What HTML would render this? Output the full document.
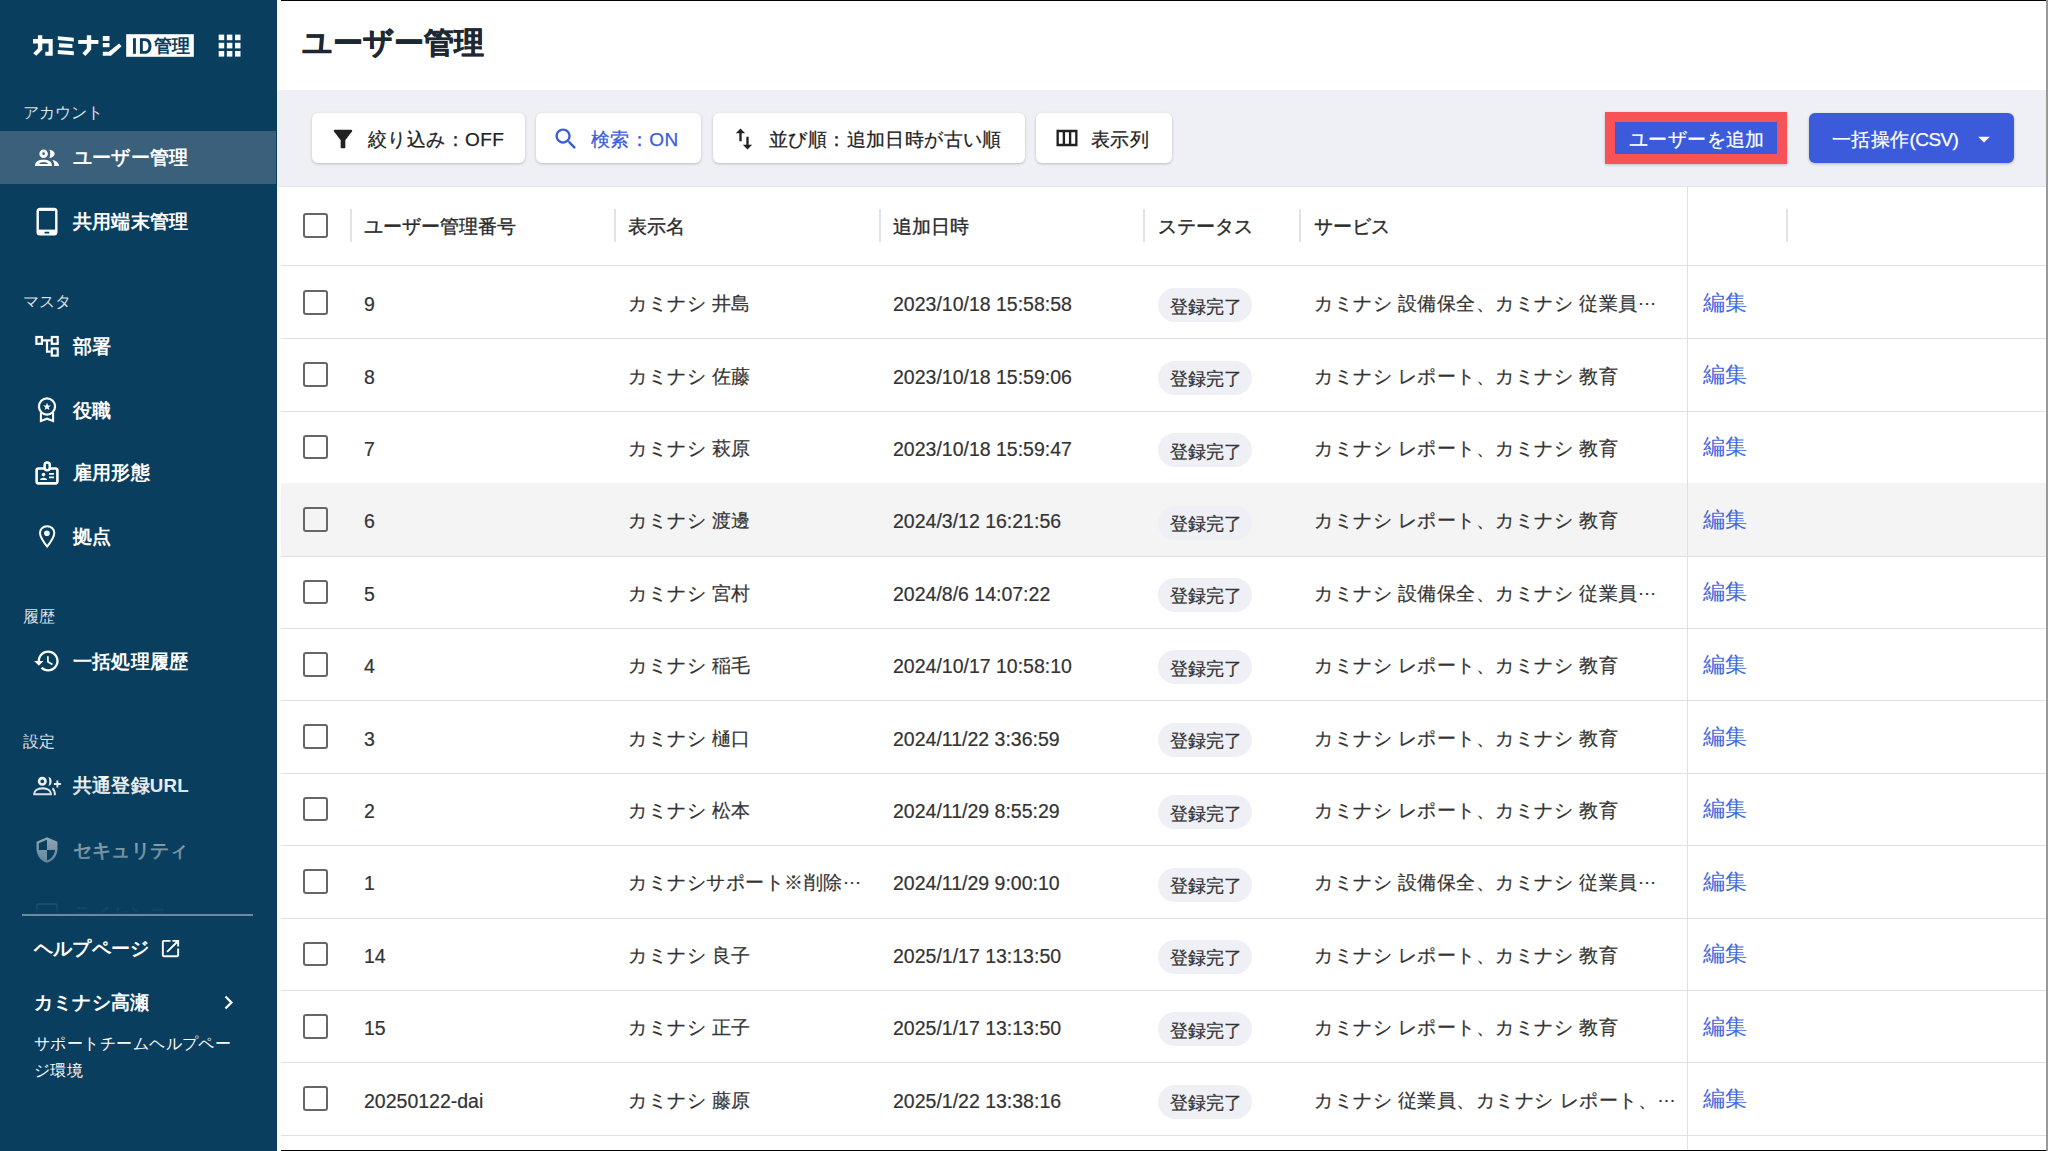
<!DOCTYPE html><html lang="ja"><head><meta charset="utf-8"><style>
*{box-sizing:border-box;margin:0;padding:0}
html,body{width:2048px;height:1151px;overflow:hidden;background:#fff}
body{position:relative;font-family:"Liberation Sans",sans-serif;color:#333}
.a{position:absolute;white-space:nowrap}
svg{position:absolute;display:block}
#side{position:absolute;left:0;top:0;width:277px;height:1151px;background:#0a3e5e;overflow:hidden}
.lbl{position:absolute;left:23px;font-size:16px;line-height:20px;color:rgba(255,255,255,0.88)}
.nav{position:absolute;left:73px;font-size:18.7px;letter-spacing:0.2px;line-height:24px;font-weight:bold;color:#fff}
.btn{position:absolute;top:113px;height:50px;background:#fff;border-radius:6px;box-shadow:0 1px 3px rgba(0,0,0,0.22)}
.bt{position:absolute;font-size:19px;letter-spacing:0.4px;line-height:24px;top:127.5px;color:#222;-webkit-text-stroke:0.25px currentColor}
.hd{position:absolute;top:215px;font-size:19px;line-height:24px;color:#2a2a2a;-webkit-text-stroke:0.35px #2a2a2a}
.sep{position:absolute;top:209px;width:2px;height:33px;background:#e3e3e3}
.cb{position:absolute;left:303px;width:25px;height:24.5px;border:2.6px solid #666;border-radius:3px}
.rl{position:absolute;left:281px;width:1765px;height:1px;background:#e0e0e0}
.tx{position:absolute;font-size:19.5px;line-height:24px;color:#333;-webkit-text-stroke:0.2px #333}
.badge{position:absolute;left:1158px;width:94px;height:34px;border-radius:17px;background:#eff0f5}
.bdt{position:absolute;left:1169.5px;font-size:17.8px;line-height:22px;color:#333;-webkit-text-stroke:0.25px #333}
.ed{position:absolute;left:1703px;font-size:21.5px;line-height:26px;color:#4568dd}
</style></head><body>
<div id="side">
<svg style="left:0;top:0" width="200" height="70" viewBox="0 0 200 70"><g fill="#fff">
<path d="M33 39 H52.7 V55.7 H45.3 V51.8 H48.6 V43.5 H33 Z"/>
<path d="M37.9 35.3 H42.3 V49.8 L36.3 55.7 L33.2 53.2 L37.9 48.4 Z"/>
<path d="M57.8 36.3 L73.8 37.7 V41.4 L57.8 40 Z"/>
<path d="M59 43.2 L72.4 44.1 V48.1 L59 47.2 Z"/>
<path d="M57.8 49.9 L73.8 51.3 V55.3 L57.8 54.1 Z"/>
<path d="M78.2 40 H98.4 V43.9 H78.2 Z"/>
<path d="M86.8 35.3 H91.2 V49.8 L85.4 56 L82.4 53.2 L86.8 48.6 Z"/>
<path d="M102.8 36 H109.5 V40.9 H102.8 Z"/>
<path d="M102.8 43 H109.5 V47.2 H102.8 Z"/>
<path d="M102.8 51.8 H108.8 L119 43.5 L121.6 46.2 L111 55.7 H102.8 Z"/>
<rect x="126.2" y="34.2" width="67.6" height="22.6"/>
</g>
<g fill="#0a3e5e">
<rect x="133" y="38.2" width="2.9" height="15.6"/>
<path d="M139.9 38.2 H144.6 C149.3 38.2 151.5 41.6 151.5 46 C151.5 50.4 149.3 53.8 144.6 53.8 H139.9 Z M142.8 41 V51 H144.5 C147.2 51 148.5 49 148.5 46 C148.5 43 147.2 41 144.5 41 Z"/>
</g></svg>
<div class="a" style="left:154px;top:35px;font-size:17.5px;line-height:22px;font-weight:bold;color:#0a3e5e">管理</div>
<svg style="left:218px;top:34px" width="24" height="24" viewBox="0 0 24 24"><rect x="0.70" y="0.60" width="5.5" height="5.6" fill="#fff"/><rect x="8.85" y="0.60" width="5.5" height="5.6" fill="#fff"/><rect x="17.00" y="0.60" width="5.5" height="5.6" fill="#fff"/><rect x="0.70" y="8.80" width="5.5" height="5.6" fill="#fff"/><rect x="8.85" y="8.80" width="5.5" height="5.6" fill="#fff"/><rect x="17.00" y="8.80" width="5.5" height="5.6" fill="#fff"/><rect x="0.70" y="17.00" width="5.5" height="5.6" fill="#fff"/><rect x="8.85" y="17.00" width="5.5" height="5.6" fill="#fff"/><rect x="17.00" y="17.00" width="5.5" height="5.6" fill="#fff"/></svg>
<div class="lbl" style="top:103px">アカウント</div>
<div class="a" style="left:0;top:131px;width:276px;height:53px;background:#3a607c"></div>
<svg style="left:35px;top:146px" width="24" height="24" viewBox="0 0 24 24">
<circle cx="8.6" cy="7.7" r="2.8" fill="none" stroke="#fff" stroke-width="2.9"/>
<path d="M0 20 C0 15.5 3.5 13.8 8.5 13.8 C13.5 13.8 17 15.5 17 20 Z" fill="#fff"/>
<path d="M4.1 18 C4.5 16.5 6.5 16.2 8.6 16.2 C10.7 16.2 12.7 16.5 13.1 18 Z" fill="#3a607c"/>
<path d="M13.8 3.7 A5.9 4.15 0 0 1 13.8 12 A1.4 4.15 0 0 0 13.8 3.7 Z" fill="#fff"/>
<path d="M17.3 14 C21.5 14.8 23.9 16.8 23.9 20 L19.3 20 C19.3 17.5 18.8 15.5 17.3 14 Z" fill="#fff"/>
</svg>
<div class="nav" style="top:146px;">ユーザー管理</div>
<svg style="left:36px;top:207px" width="22" height="29" viewBox="0 0 22 29">
<rect x="0.5" y="0.8" width="21" height="27.8" rx="3.5" fill="#fff"/>
<rect x="2.9" y="3.9" width="16.2" height="18.7" fill="#0a3e5e"/>
<rect x="8.5" y="24.7" width="4.8" height="1.8" rx="0.6" fill="#0a3e5e"/>
</svg>
<div class="nav" style="top:210px;">共用端末管理</div>
<div class="lbl" style="top:292px">マスタ</div>
<svg style="left:35px;top:335px" width="25" height="23" viewBox="0 0 25 23">
<g fill="none" stroke="#fff" stroke-width="2.2">
<rect x="1.4" y="2.0" width="5.5" height="6.8"/>
<rect x="16.8" y="2.0" width="5.9" height="6.8"/>
<rect x="16.8" y="13.5" width="5.9" height="7.1"/>
<path d="M8 5.3 H15.7 M12 5.3 V16.7 H15.7"/>
</g></svg>
<div class="nav" style="top:335px;">部署</div>
<svg style="left:37px;top:396px" width="20" height="28" viewBox="0 0 20 28">
<circle cx="10" cy="10.5" r="8.05" fill="none" stroke="#fff" stroke-width="2.2"/>
<path d="M10 6.8 L11.1 9.4 L13.8 9.6 L11.7 11.3 L12.4 14 L10 12.5 L7.6 14 L8.3 11.3 L6.2 9.6 L8.9 9.4 Z" fill="#fff"/>
<path d="M3.9 16.8 V24.9 L10 22.7 L16.1 24.9 V16.8" fill="none" stroke="#fff" stroke-width="2.1"/>
</svg>
<div class="nav" style="top:399px;">役職</div>
<svg style="left:35px;top:460px" width="25" height="26" viewBox="0 0 25 26">
<rect x="1.6" y="8.5" width="20.8" height="14.9" rx="1.8" fill="none" stroke="#fff" stroke-width="2.6"/>
<rect x="9.65" y="2.45" width="5.1" height="7.9" rx="2.5" fill="#0a3e5e" stroke="#fff" stroke-width="2.5"/>
<circle cx="8.5" cy="14.6" r="1.8" fill="#fff"/>
<path d="M5 20.1 C5 18.6 6.5 17.7 8.6 17.7 C10.7 17.7 12.2 18.6 12.2 20.1 Z" fill="#fff"/>
<path d="M14 13.9 H19 M14 17.4 H19" stroke="#fff" stroke-width="1.8"/>
</svg>
<div class="nav" style="top:461px;">雇用形態</div>
<svg style="left:37px;top:523px" width="20" height="27" viewBox="0 0 20 27">
<path d="M10.15 3.2 C5.8 3.2 3 6.2 3 10 C3 14.5 10.15 23.6 10.15 23.6 C10.15 23.6 17.3 14.5 17.3 10 C17.3 6.2 14.5 3.2 10.15 3.2 Z" fill="none" stroke="#fff" stroke-width="2" stroke-linejoin="round"/>
<circle cx="9.9" cy="10.3" r="2.8" fill="#fff"/>
</svg>
<div class="nav" style="top:525px;">拠点</div>
<div class="lbl" style="top:607px">履歴</div>
<svg style="left:33px;top:647px" width="28" height="28" viewBox="0 0 24 24">
<path fill="#fff" d="M13 3c-4.97 0-9 4.03-9 9H1l3.89 3.89.07.14L9 12H6c0-3.87 3.13-7 7-7s7 3.13 7 7-3.13 7-7 7c-1.93 0-3.68-.79-4.94-2.06l-1.42 1.42C8.27 19.99 10.51 21 13 21c4.97 0 9-4.03 9-9s-4.03-9-9-9zm-1 5v5l4.28 2.54.72-1.21-3.5-2.08V8H12z"/>
</svg>
<div class="nav" style="top:650px;">一括処理履歴</div>
<div class="lbl" style="top:732px">設定</div>
<svg style="left:32px;top:776px" width="30" height="22" viewBox="0 0 30 22">
<circle cx="10.3" cy="5.3" r="3.2" fill="none" stroke="#fff" stroke-width="2.6"/>
<path fill="#fff" fill-rule="evenodd" d="M1.2 19.2 C1.2 14 5 11.3 10.6 11.3 C16.2 11.3 20 14 20 19.2 Z M3.3 17.3 C3.6 14.9 6.5 13.4 10.6 13.4 C14.7 13.4 17.6 14.9 17.9 17.3 Z"/>
<path fill="#fff" d="M15.8 1.1 A3.8 4.35 0 0 1 15.8 9.8 A1.5 4.35 0 0 0 15.8 1.1 Z"/>
<path d="M20.4 12.3 C22.1 13.4 22.9 15.5 22.9 19.2" fill="none" stroke="#fff" stroke-width="2"/>
<path d="M25.4 4.6 V11.4 M21.9 8 H28.9" stroke="#fff" stroke-width="1.9"/>
</svg>
<div class="nav" style="top:774px;">共通登録URL</div>
<svg style="left:33px;top:836px" width="28" height="28" viewBox="0 0 24 24">
<path fill="#fff" d="M12 1L3 5v6c0 5.55 3.84 10.74 9 12 5.16-1.26 9-6.45 9-12V5l-9-4zm0 10.99h7c-.53 4.12-3.28 7.79-7 8.94V12H5V6.3l7-3.11v8.8z"/>
</svg>
<div class="nav" style="top:839px;">セキュリティ</div>
<div class="a" style="left:0;top:880px;width:277px;height:34px;overflow:hidden">
<div class="a" style="left:36px;top:23px;width:22px;height:22px;border:2px solid #fff;border-radius:3px"></div>
<div class="a" style="left:73px;top:22.6px;font-size:18.7px;line-height:24px;font-weight:bold;color:#fff">ライセンス</div>
</div>
<div class="a" style="left:0;top:771px;width:277px;height:144px;background:linear-gradient(rgba(10,62,94,0),rgba(10,62,94,1))"></div>
<div class="a" style="left:22px;top:914px;width:231px;height:2px;background:#6f8aa0"></div>
<div class="nav" style="top:937px;left:34px">ヘルプページ</div>
<svg style="left:159px;top:937px" width="23" height="23" viewBox="0 0 24 24">
<path fill="#fff" d="M19 19H5V5h7V3H5c-1.11 0-2 .9-2 2v14c0 1.1.89 2 2 2h14c1.1 0 2-.9 2-2v-7h-2v7zM14 3v2h3.59l-9.83 9.83 1.41 1.41L19 6.41V10h2V3h-7z"/>
</svg>
<div class="nav" style="top:991px;left:34px">カミナシ高瀬</div>
<svg style="left:215px;top:989.3px" width="27" height="27" viewBox="0 0 24 24">
<path fill="#fff" d="M10 6 8.59 7.41 13.17 12l-4.58 4.59L10 18l6-6z"/>
</svg>
<div class="a" style="left:34px;top:1030px;font-size:16.4px;letter-spacing:0.45px;line-height:27px;color:#fff">サポートチームヘルプペー<br>ジ環境</div>
</div>
<div class="a" style="left:302px;top:25px;font-size:30px;line-height:36px;font-weight:bold;color:#1e2833;-webkit-text-stroke:0.5px #1e2833">ユーザー管理</div>
<div class="a" style="left:277px;top:90px;width:1769px;height:97px;background:#eff0f5"></div>
<div class="btn" style="left:312px;width:213px"></div>
<svg style="left:329px;top:124.5px" width="28" height="28" viewBox="0 0 24 24"><path fill="#212121" d="M4.25 5.61C6.27 8.2 10 13 10 13v6c0 .55.45 1 1 1h2c.55 0 1-.45 1-1v-6s3.72-4.8 5.74-7.39c.51-.66.04-1.61-.79-1.61H5.04c-.83 0-1.3.95-.79 1.61z"/></svg>
<div class="bt" style="left:368px">絞り込み：OFF</div>
<div class="btn" style="left:536px;width:165px"></div>
<svg style="left:552px;top:124.5px" width="28" height="28" viewBox="0 0 24 24"><path fill="#3b5bdb" d="M15.5 14h-.79l-.28-.27C15.41 12.59 16 11.11 16 9.5 16 5.910 13.09 3 9.5 3S3 5.91 3 9.5 5.91 16 9.5 16c1.61 0 3.09-.59 4.23-1.57l.27.28v.79l5 4.99L20.49 19l-4.99-5zm-6 0C7.01 14 5 11.99 5 9.5S7.01 5 9.5 5 14 7.01 14 9.5 11.99 14 9.5 14z"/></svg>
<div class="bt" style="left:591px;color:#3b5bdb">検索：ON</div>
<div class="btn" style="left:713px;width:312px"></div>
<svg style="left:730px;top:124.5px" width="28" height="28" viewBox="0 0 24 24"><path fill="#212121" d="M16 17.01V10h-2v7.01h-3L15 21l4-3.99h-3zM9 3 5 6.99h3V14h2V6.99h3L9 3z"/></svg>
<div class="bt" style="left:769px">並び順：追加日時が古い順</div>
<div class="btn" style="left:1036px;width:136px"></div>
<svg style="left:1052.6px;top:124.2px" width="28" height="28" viewBox="0 0 24 24"><path fill="#212121" d="M21 5H3v14h18V5zM8.33 17H5V7h3.33v10zm5.34 0h-3.33V7h3.33v10zM19 17h-3.33V7H19v10z"/></svg>
<div class="bt" style="left:1091px">表示列</div>
<div class="a" style="left:1605px;top:112px;width:182px;height:52px;background:#f75255;box-shadow:0 1px 3px rgba(0,0,0,0.2)"></div>
<div class="a" style="left:1615px;top:122px;width:162px;height:32px;background:#3b5bdb"></div>
<div class="bt" style="left:1629px;color:#fff;font-size:19px;-webkit-text-stroke:0.25px #fff">ユーザーを追加</div>
<div class="a" style="left:1809px;top:113px;width:205px;height:50px;background:#3b5bdb;border-radius:6px;box-shadow:0 1px 3px rgba(0,0,0,0.25)"></div>
<div class="bt" style="left:1832px;color:#fff;font-size:19px;-webkit-text-stroke:0.25px #fff">一括操作<span style="letter-spacing:-0.6px">(CSV)</span></div>
<svg style="left:1970px;top:124.5px" width="28" height="28" viewBox="0 0 24 24"><path fill="#fff" d="M7 10l5 5 5-5z"/></svg>
<div class="a" style="left:277px;top:186.5px;width:1769px;height:965px;background:#fff;border-radius:6px 6px 0 0"></div>
<div class="a" style="left:279px;top:186px;width:1767px;height:1px;background:#e4e5ea"></div>
<div class="cb" style="top:213px"></div>
<div class="sep" style="left:349.5px"></div>
<div class="sep" style="left:614px"></div>
<div class="sep" style="left:878.5px"></div>
<div class="sep" style="left:1143px"></div>
<div class="sep" style="left:1299px"></div>
<div class="sep" style="left:1786px"></div>
<div class="hd" style="left:364px">ユーザー管理番号</div>
<div class="hd" style="left:628px">表示名</div>
<div class="hd" style="left:893px">追加日時</div>
<div class="hd" style="left:1158px">ステータス</div>
<div class="hd" style="left:1314px">サービス</div>
<div class="rl" style="top:264.5px"></div>
<div class="cb" style="top:290.00px"></div>
<div class="tx" style="left:364px;top:292.20px">9</div>
<div class="tx" style="left:628px;top:292.20px;font-size:19px;letter-spacing:0.5px">カミナシ 井島</div>
<div class="tx" style="left:893px;top:292.20px">2023/10/18 15:58:58</div>
<div class="badge" style="top:288.40px"></div>
<div class="bdt" style="top:295.80px">登録完了</div>
<div class="tx" style="left:1314px;top:292.20px;font-size:19px;letter-spacing:0.5px">カミナシ 設備保全、カミナシ 従業員<span style="position:relative;top:-5px">…</span></div>
<div class="ed" style="top:289.50px">編集</div>
<div class="rl" style="top:338.40px"></div>
<div class="cb" style="top:362.40px"></div>
<div class="tx" style="left:364px;top:364.60px">8</div>
<div class="tx" style="left:628px;top:364.60px;font-size:19px;letter-spacing:0.5px">カミナシ 佐藤</div>
<div class="tx" style="left:893px;top:364.60px">2023/10/18 15:59:06</div>
<div class="badge" style="top:360.80px"></div>
<div class="bdt" style="top:368.20px">登録完了</div>
<div class="tx" style="left:1314px;top:364.60px;font-size:19px;letter-spacing:0.5px">カミナシ レポート、カミナシ 教育</div>
<div class="ed" style="top:361.90px">編集</div>
<div class="rl" style="top:410.80px"></div>
<div class="cb" style="top:434.80px"></div>
<div class="tx" style="left:364px;top:437.00px">7</div>
<div class="tx" style="left:628px;top:437.00px;font-size:19px;letter-spacing:0.5px">カミナシ 萩原</div>
<div class="tx" style="left:893px;top:437.00px">2023/10/18 15:59:47</div>
<div class="badge" style="top:433.20px"></div>
<div class="bdt" style="top:440.60px">登録完了</div>
<div class="tx" style="left:1314px;top:437.00px;font-size:19px;letter-spacing:0.5px">カミナシ レポート、カミナシ 教育</div>
<div class="ed" style="top:434.30px">編集</div>
<div class="rl" style="top:483.20px"></div>
<div class="a" style="left:281px;top:483.20px;width:1765px;height:72.4px;background:#f4f4f4"></div>
<div class="cb" style="top:507.20px"></div>
<div class="tx" style="left:364px;top:509.40px">6</div>
<div class="tx" style="left:628px;top:509.40px;font-size:19px;letter-spacing:0.5px">カミナシ 渡邊</div>
<div class="tx" style="left:893px;top:509.40px">2024/3/12 16:21:56</div>
<div class="badge" style="top:505.60px"></div>
<div class="bdt" style="top:513.00px">登録完了</div>
<div class="tx" style="left:1314px;top:509.40px;font-size:19px;letter-spacing:0.5px">カミナシ レポート、カミナシ 教育</div>
<div class="ed" style="top:506.70px">編集</div>
<div class="rl" style="top:555.60px"></div>
<div class="cb" style="top:579.60px"></div>
<div class="tx" style="left:364px;top:581.80px">5</div>
<div class="tx" style="left:628px;top:581.80px;font-size:19px;letter-spacing:0.5px">カミナシ 宮村</div>
<div class="tx" style="left:893px;top:581.80px">2024/8/6 14:07:22</div>
<div class="badge" style="top:578.00px"></div>
<div class="bdt" style="top:585.40px">登録完了</div>
<div class="tx" style="left:1314px;top:581.80px;font-size:19px;letter-spacing:0.5px">カミナシ 設備保全、カミナシ 従業員<span style="position:relative;top:-5px">…</span></div>
<div class="ed" style="top:579.10px">編集</div>
<div class="rl" style="top:628.00px"></div>
<div class="cb" style="top:652.00px"></div>
<div class="tx" style="left:364px;top:654.20px">4</div>
<div class="tx" style="left:628px;top:654.20px;font-size:19px;letter-spacing:0.5px">カミナシ 稲毛</div>
<div class="tx" style="left:893px;top:654.20px">2024/10/17 10:58:10</div>
<div class="badge" style="top:650.40px"></div>
<div class="bdt" style="top:657.80px">登録完了</div>
<div class="tx" style="left:1314px;top:654.20px;font-size:19px;letter-spacing:0.5px">カミナシ レポート、カミナシ 教育</div>
<div class="ed" style="top:651.50px">編集</div>
<div class="rl" style="top:700.40px"></div>
<div class="cb" style="top:724.40px"></div>
<div class="tx" style="left:364px;top:726.60px">3</div>
<div class="tx" style="left:628px;top:726.60px;font-size:19px;letter-spacing:0.5px">カミナシ 樋口</div>
<div class="tx" style="left:893px;top:726.60px">2024/11/22 3:36:59</div>
<div class="badge" style="top:722.80px"></div>
<div class="bdt" style="top:730.20px">登録完了</div>
<div class="tx" style="left:1314px;top:726.60px;font-size:19px;letter-spacing:0.5px">カミナシ レポート、カミナシ 教育</div>
<div class="ed" style="top:723.90px">編集</div>
<div class="rl" style="top:772.80px"></div>
<div class="cb" style="top:796.80px"></div>
<div class="tx" style="left:364px;top:799.00px">2</div>
<div class="tx" style="left:628px;top:799.00px;font-size:19px;letter-spacing:0.5px">カミナシ 松本</div>
<div class="tx" style="left:893px;top:799.00px">2024/11/29 8:55:29</div>
<div class="badge" style="top:795.20px"></div>
<div class="bdt" style="top:802.60px">登録完了</div>
<div class="tx" style="left:1314px;top:799.00px;font-size:19px;letter-spacing:0.5px">カミナシ レポート、カミナシ 教育</div>
<div class="ed" style="top:796.30px">編集</div>
<div class="rl" style="top:845.20px"></div>
<div class="cb" style="top:869.20px"></div>
<div class="tx" style="left:364px;top:871.40px">1</div>
<div class="tx" style="left:628px;top:871.40px;font-size:19px;letter-spacing:0.5px">カミナシサポート※削除<span style="position:relative;top:-5px">…</span></div>
<div class="tx" style="left:893px;top:871.40px">2024/11/29 9:00:10</div>
<div class="badge" style="top:867.60px"></div>
<div class="bdt" style="top:875.00px">登録完了</div>
<div class="tx" style="left:1314px;top:871.40px;font-size:19px;letter-spacing:0.5px">カミナシ 設備保全、カミナシ 従業員<span style="position:relative;top:-5px">…</span></div>
<div class="ed" style="top:868.70px">編集</div>
<div class="rl" style="top:917.60px"></div>
<div class="cb" style="top:941.60px"></div>
<div class="tx" style="left:364px;top:943.80px">14</div>
<div class="tx" style="left:628px;top:943.80px;font-size:19px;letter-spacing:0.5px">カミナシ 良子</div>
<div class="tx" style="left:893px;top:943.80px">2025/1/17 13:13:50</div>
<div class="badge" style="top:940.00px"></div>
<div class="bdt" style="top:947.40px">登録完了</div>
<div class="tx" style="left:1314px;top:943.80px;font-size:19px;letter-spacing:0.5px">カミナシ レポート、カミナシ 教育</div>
<div class="ed" style="top:941.10px">編集</div>
<div class="rl" style="top:990.00px"></div>
<div class="cb" style="top:1014.00px"></div>
<div class="tx" style="left:364px;top:1016.20px">15</div>
<div class="tx" style="left:628px;top:1016.20px;font-size:19px;letter-spacing:0.5px">カミナシ 正子</div>
<div class="tx" style="left:893px;top:1016.20px">2025/1/17 13:13:50</div>
<div class="badge" style="top:1012.40px"></div>
<div class="bdt" style="top:1019.80px">登録完了</div>
<div class="tx" style="left:1314px;top:1016.20px;font-size:19px;letter-spacing:0.5px">カミナシ レポート、カミナシ 教育</div>
<div class="ed" style="top:1013.50px">編集</div>
<div class="rl" style="top:1062.40px"></div>
<div class="cb" style="top:1086.40px"></div>
<div class="tx" style="left:364px;top:1088.60px">20250122-dai</div>
<div class="tx" style="left:628px;top:1088.60px;font-size:19px;letter-spacing:0.5px">カミナシ 藤原</div>
<div class="tx" style="left:893px;top:1088.60px">2025/1/22 13:38:16</div>
<div class="badge" style="top:1084.80px"></div>
<div class="bdt" style="top:1092.20px">登録完了</div>
<div class="tx" style="left:1314px;top:1088.60px;font-size:19px;letter-spacing:0.5px">カミナシ 従業員、カミナシ レポート、<span style="position:relative;top:-5px">…</span></div>
<div class="ed" style="top:1085.90px">編集</div>
<div class="rl" style="top:1134.80px"></div>
<div class="a" style="left:1687px;top:187px;width:1px;height:964px;background:#e0e0e0"></div>
<div class="a" style="left:281px;top:0;width:1766px;height:1px;background:#000"></div>
<div class="a" style="left:281px;top:1150px;width:1766px;height:1px;background:#000"></div>
<div class="a" style="left:2046px;top:0;width:2px;height:1151px;background:#999"></div>
</body></html>
